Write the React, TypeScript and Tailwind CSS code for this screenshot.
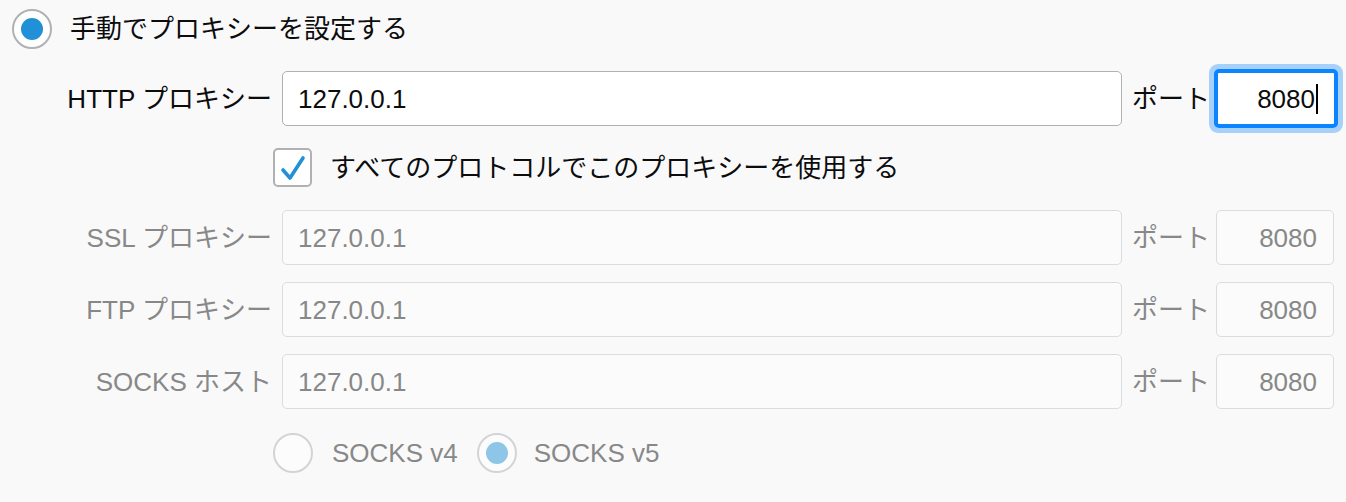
import React from "react";

const font = { fontFamily: '"Liberation Sans", "Noto Sans CJK JP", sans-serif' };

function Row({ label, value, port, disabled, focused }: { label: string; value: string; port: string; disabled?: boolean; focused?: boolean }) {
  const txt = disabled ? "text-[#888888]" : "text-[#0c0c0d]";
  return (
    <div className="flex items-center h-[55px]">
      <div className={`w-[272px] text-right whitespace-nowrap ${txt}`}>{label}</div>
      <div
        className={`ml-[10px] w-[840px] h-[55px] rounded-[5px] border flex items-center pl-[15px] ${
          disabled ? "border-[#dcdcde] bg-[#fbfbfb] text-[#888888]" : "border-[#b1b1b3] bg-white text-[#0c0c0d]"
        }`}
      >
        {value}
      </div>
      <div className={`ml-[10px] w-[73px] whitespace-nowrap ${txt}`}>ポート</div>
      {focused ? (
        <div className="ml-[4px] p-[5px] rounded-[9px] bg-[#a7d1fb]">
          <div className="w-[124px] h-[59px] rounded-[5px] border-[4px] border-[#0a84ff] bg-white flex items-center justify-end pr-[16px] text-[#0c0c0d]">
            8080<span className="inline-block w-[2px] h-[30px] bg-black ml-[1px]" />
          </div>
        </div>
      ) : (
        <div
          className={`ml-[11px] w-[118px] h-[55px] rounded-[5px] border flex items-center justify-end pr-[16px] ${
            disabled ? "border-[#dcdcde] bg-[#fbfbfb] text-[#888888]" : "border-[#b1b1b3] bg-white"
          }`}
        >
          {port}
        </div>
      )}
    </div>
  );
}

function Radio({ checked, disabled }: { checked?: boolean; disabled?: boolean }) {
  return (
    <div
      className={`w-[40px] h-[40px] rounded-full border-2 flex items-center justify-center shrink-0 ${
        disabled ? "border-[#d4d4d6] bg-[#fcfcfc]" : "border-[#b1b1b3] bg-white"
      }`}
    >
      {checked && <div className={`w-[22px] h-[22px] rounded-full ${disabled ? "bg-[#8ec6e8]" : "bg-[#2190d6]"}`} />}
    </div>
  );
}

export default function App() {
  return (
    <div className="w-[1346px] h-[502px] bg-[#f9f9fa] text-[26px] leading-none overflow-hidden" style={font}>
      <div className="flex flex-col pt-[9px]">
        <div className="flex items-center h-[40px] pl-[12px]">
          <Radio checked />
          <span className="ml-[18px] text-[#0c0c0d]">手動でプロキシーを設定する</span>
        </div>
        <div className="mt-[22px]">
          <Row label="HTTP プロキシー" value="127.0.0.1" port="8080" focused />
        </div>
        <div className="mt-[22px] flex items-center h-[39px] pl-[273px]">
          <div className="w-[39px] h-[39px] rounded-[5px] border-2 border-[#b1b1b3] bg-white flex items-center justify-center">
            <svg width="28" height="28" viewBox="0 0 28 28">
              <path d="M4 16 L11 24 L24 4" fill="none" stroke="#2190d6" strokeWidth="3.6" strokeLinecap="round" strokeLinejoin="round" />
            </svg>
          </div>
          <span className="ml-[18px] text-[#0c0c0d]">すべてのプロトコルでこのプロキシーを使用する</span>
        </div>
        <div className="mt-[23px] flex flex-col gap-[17px]">
          <Row label="SSL プロキシー" value="127.0.0.1" port="8080" disabled />
          <Row label="FTP プロキシー" value="127.0.0.1" port="8080" disabled />
          <Row label="SOCKS ホスト" value="127.0.0.1" port="8080" disabled />
        </div>
        <div className="mt-[24px] flex items-center h-[40px] pl-[273px] text-[#888888]">
          <Radio disabled />
          <span className="ml-[19px]">SOCKS v4</span>
          <div className="ml-[19px]">
            <Radio checked disabled />
          </div>
          <span className="ml-[17px]">SOCKS v5</span>
        </div>
      </div>
    </div>
  );
}
